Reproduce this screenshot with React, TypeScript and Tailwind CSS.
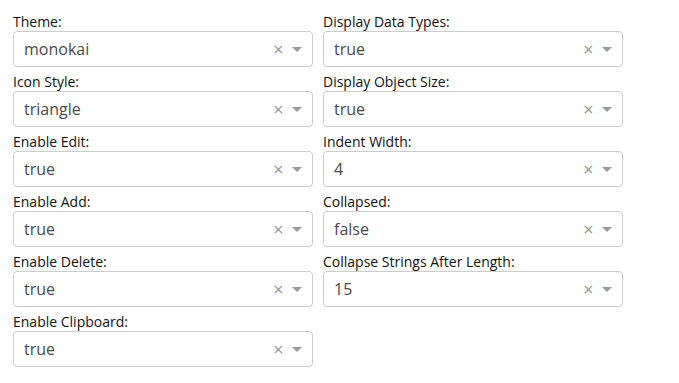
import React from "react";

const left: [string, string][] = [
  ["Theme:", "monokai"],
  ["Icon Style:", "triangle"],
  ["Enable Edit:", "true"],
  ["Enable Add:", "true"],
  ["Enable Delete:", "true"],
  ["Enable Clipboard:", "true"],
];
const right: [string, string][] = [
  ["Display Data Types:", "true"],
  ["Display Object Size:", "true"],
  ["Indent Width:", "4"],
  ["Collapsed:", "false"],
  ["Collapse Strings After Length:", "15"],
];

function Field({ label, value }: { label: string; value: string }) {
  return (
    <div className="flex flex-col mb-[6px]">
      <div className="text-[14px] leading-[18px] text-[#111]">{label}</div>
      <div className="flex items-center h-[36px] w-[300px] border border-[#ccc] rounded-[4px] bg-white">
        <div className="flex-1 pl-[10px] text-[16px] text-[#4a4a4a] leading-[34px]">{value}</div>
        <div className="w-[17px] text-center text-[18px] leading-none text-[#999]">×</div>
        <div className="w-[25px] pr-[5px] flex justify-center items-center">
          <span className="block w-0 h-0 border-solid border-t-[5px] border-x-[5px] border-b-[2.5px] border-t-[#999] border-x-transparent border-b-transparent mt-[3px]"></span>
        </div>
      </div>
    </div>
  );
}

export default function App() {
  return (
    <div
      className="w-[679px] h-[383px] bg-white pt-[13px] pl-[13px] flex gap-[10px]"
      style={{ fontFamily: '"Open Sans", sans-serif' }}
    >
      <div className="flex flex-col">
        {left.map(([l, v]) => (
          <Field key={l} label={l} value={v} />
        ))}
      </div>
      <div className="flex flex-col">
        {right.map(([l, v]) => (
          <Field key={l} label={l} value={v} />
        ))}
      </div>
    </div>
  );
}
